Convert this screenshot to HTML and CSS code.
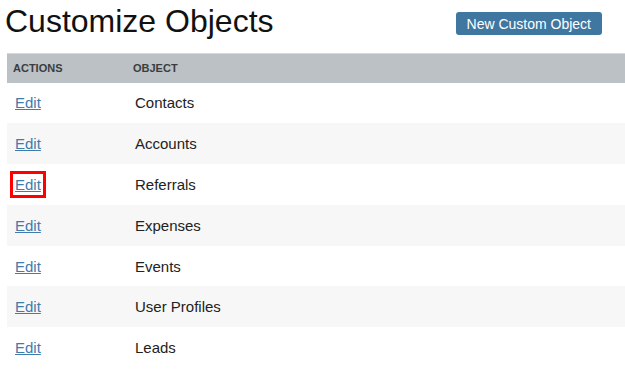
FILE: index.html
```html
<!DOCTYPE html>
<html lang="en">
<head>
    <meta charset="UTF-8">
    <title>Customize Objects</title>
    <link rel="stylesheet" href="styles.css">
</head>
<body>
    <div class="page-head">
        <h1>Customize Objects</h1>
        <button class="btn-new">New Custom Object</button>
    </div>

    <table class="objects">
        <thead>
            <tr>
                <th class="col-actions">Actions</th>
                <th>Object</th>
            </tr>
        </thead>
        <tbody>
            <tr><td><a href="#">Edit</a></td><td>Contacts</td></tr>
            <tr><td><a href="#">Edit</a></td><td>Accounts</td></tr>
            <tr><td><a href="#" class="marked">Edit</a></td><td>Referrals</td></tr>
            <tr><td><a href="#">Edit</a></td><td>Expenses</td></tr>
            <tr><td><a href="#">Edit</a></td><td>Events</td></tr>
            <tr><td><a href="#">Edit</a></td><td>User Profiles</td></tr>
            <tr><td><a href="#">Edit</a></td><td>Leads</td></tr>
        </tbody>
    </table>
</body>
</html>
```

FILE: styles.css
```css
* { margin: 0; padding: 0; box-sizing: border-box; }
body {
    font-family: "Liberation Sans", Arial, sans-serif;
    color: #222;
    background: #fff;
    padding-left: 7px;
    overflow: hidden;
}
.page-head {
    display: flex;
    justify-content: space-between;
    align-items: flex-start;
    height: 53px;
    padding-right: 23px;
}
.page-head h1 {
    font-size: 32px;
    font-weight: normal;
    color: #111;
    margin-top: 3px;
    margin-left: -2px;
}
.btn-new {
    margin-top: 12px;
    height: 23px;
    padding: 0 11px;
    font-family: inherit;
    font-size: 14px;
    color: #fff;
    background: #3f77a1;
    border: none;
    border-radius: 3px;
    cursor: pointer;
}
.objects {
    width: 100%;
    border-collapse: collapse;
}
.objects th {
    height: 29px;
    background: #bcc1c5;
    border-top: 1px solid #d6d9db;
    text-align: left;
    font-size: 11px;
    font-weight: bold;
    text-transform: uppercase;
    color: #3a3d40;
    padding: 0 6px;
}
.objects th.col-actions,
.objects td:first-child {
    width: 120px;
}
.objects td {
    height: 40.8px;
    font-size: 15px;
    padding: 0 8px;
}
.objects tbody tr:nth-child(even) {
    background: #f7f7f7;
}
.objects a {
    color: #3f7bab;
    text-decoration: underline;
}
.objects a.marked {
    outline: 3px solid #f00;
    outline-offset: 2px;
}
```
